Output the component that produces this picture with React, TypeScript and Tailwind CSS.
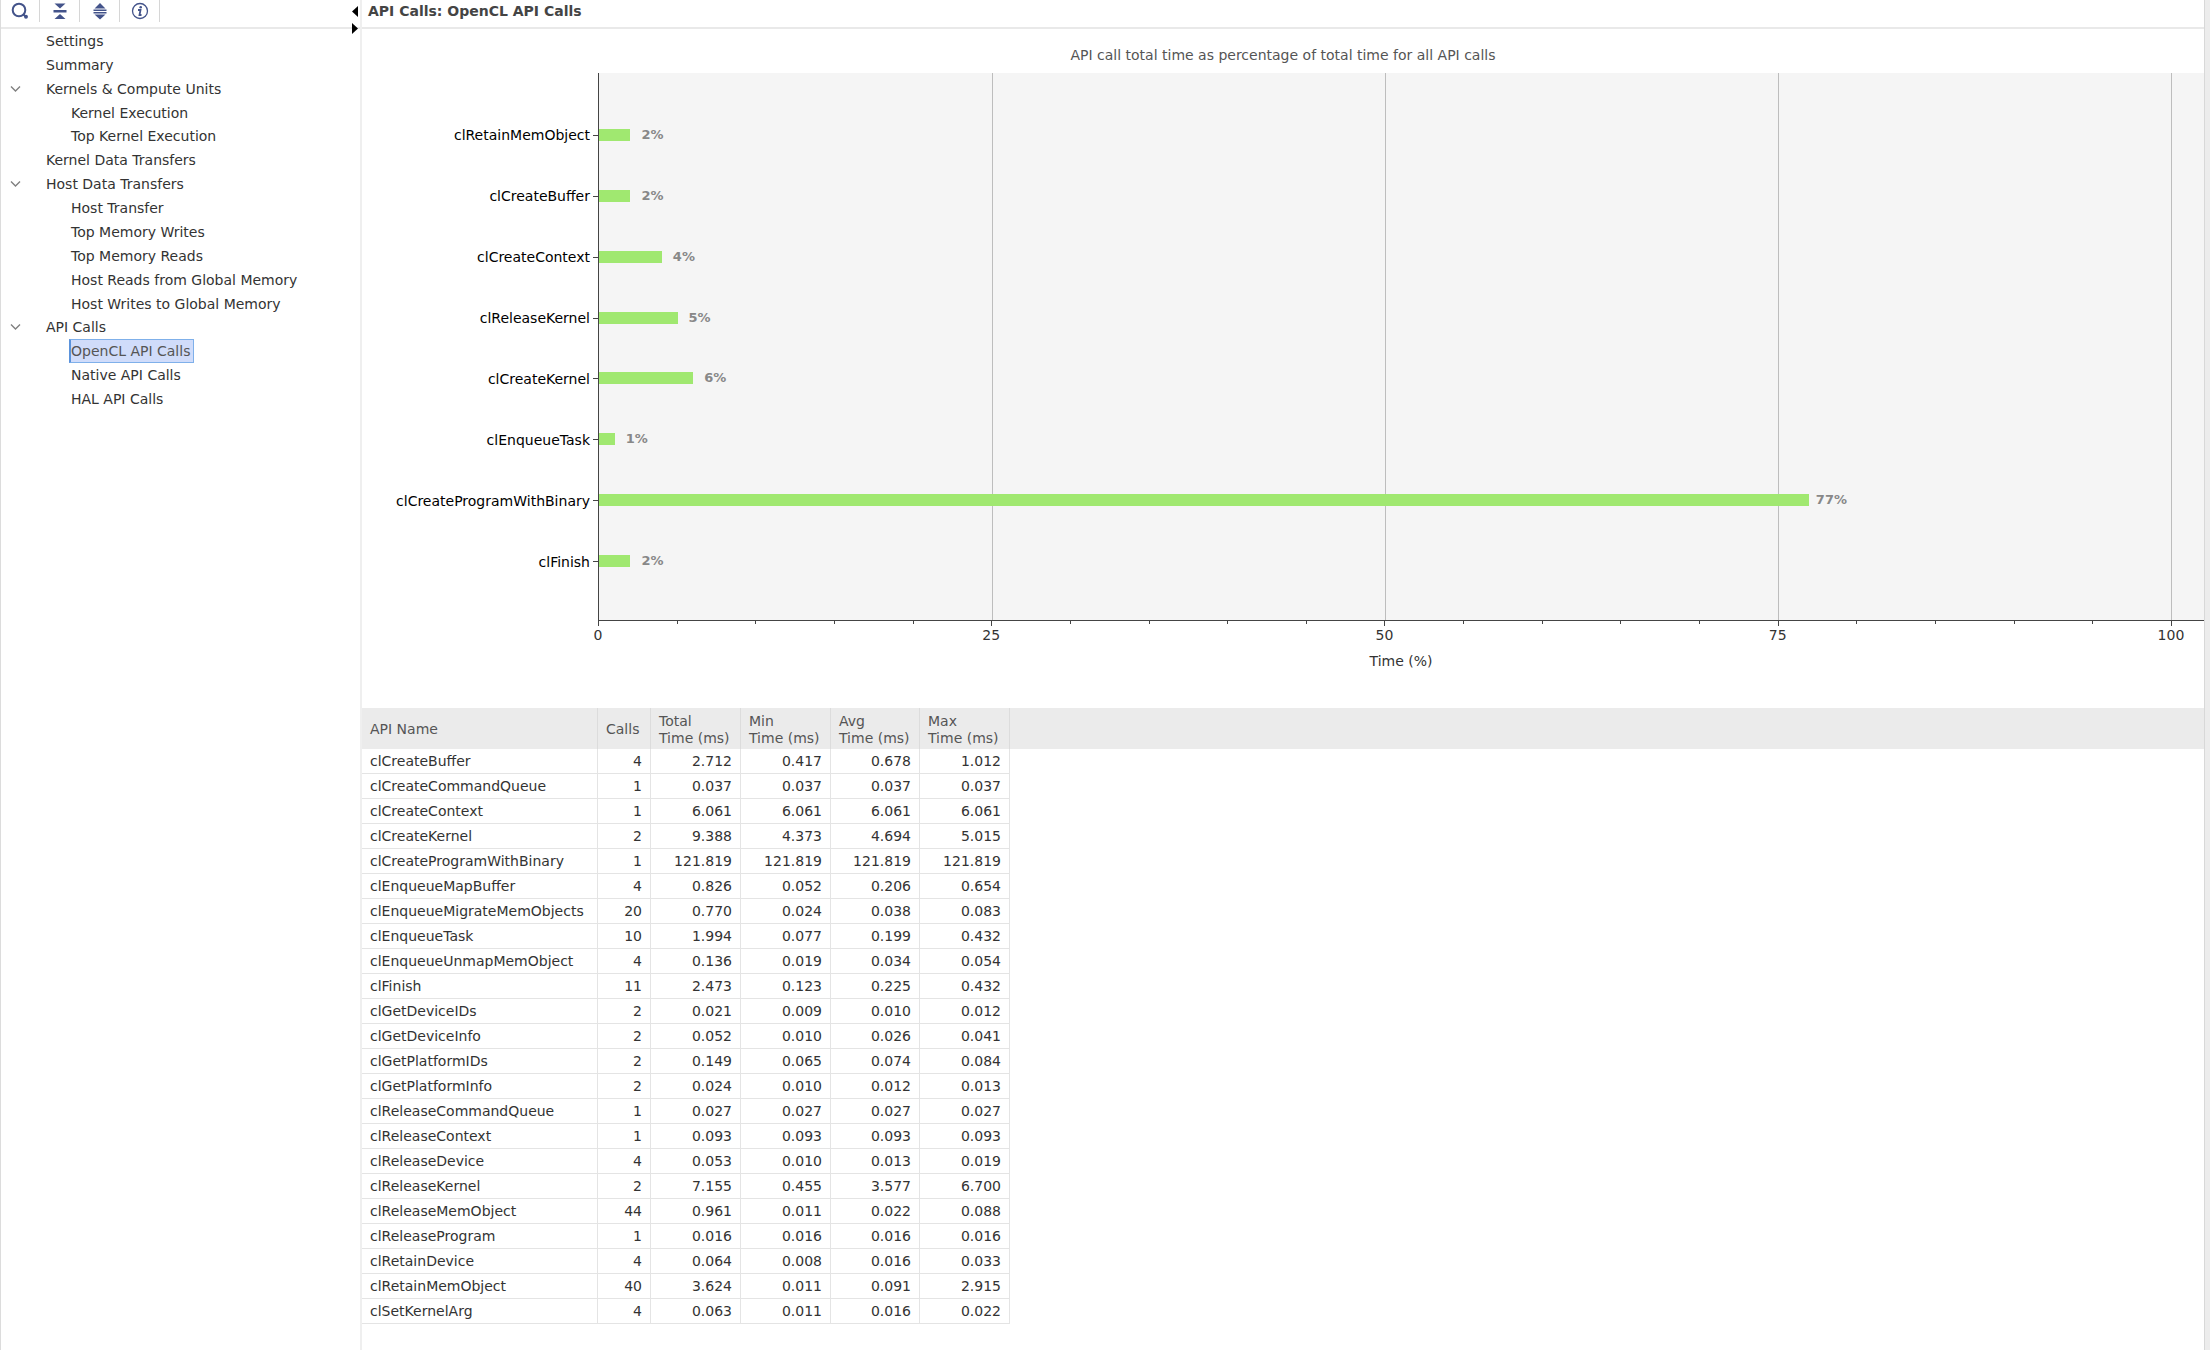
import React from "react";

type TreeItem = { label: string; depth: 0 | 1; open?: boolean; selected?: boolean };

const tree: TreeItem[] = [
  { label: "Settings", depth: 0 },
  { label: "Summary", depth: 0 },
  { label: "Kernels & Compute Units", depth: 0, open: true },
  { label: "Kernel Execution", depth: 1 },
  { label: "Top Kernel Execution", depth: 1 },
  { label: "Kernel Data Transfers", depth: 0 },
  { label: "Host Data Transfers", depth: 0, open: true },
  { label: "Host Transfer", depth: 1 },
  { label: "Top Memory Writes", depth: 1 },
  { label: "Top Memory Reads", depth: 1 },
  { label: "Host Reads from Global Memory", depth: 1 },
  { label: "Host Writes to Global Memory", depth: 1 },
  { label: "API Calls", depth: 0, open: true },
  { label: "OpenCL API Calls", depth: 1, selected: true },
  { label: "Native API Calls", depth: 1 },
  { label: "HAL API Calls", depth: 1 },
];

const bars: [string, number][] = [
  ["clRetainMemObject", 2],
  ["clCreateBuffer", 2],
  ["clCreateContext", 4],
  ["clReleaseKernel", 5],
  ["clCreateKernel", 6],
  ["clEnqueueTask", 1],
  ["clCreateProgramWithBinary", 77],
  ["clFinish", 2],
];

const AXIS_MAX = 102.1;
const toPercent = (value: number) => `${(value / AXIS_MAX) * 100}%`;
const ticks = Array.from({ length: 21 }, (_, i) => i * 5);

const columns = [["API Name"], ["Calls"], ["Total", "Time (ms)"], ["Min", "Time (ms)"], ["Avg", "Time (ms)"], ["Max", "Time (ms)"]];

const rows: string[][] = [
  ["clCreateBuffer", "4", "2.712", "0.417", "0.678", "1.012"],
  ["clCreateCommandQueue", "1", "0.037", "0.037", "0.037", "0.037"],
  ["clCreateContext", "1", "6.061", "6.061", "6.061", "6.061"],
  ["clCreateKernel", "2", "9.388", "4.373", "4.694", "5.015"],
  ["clCreateProgramWithBinary", "1", "121.819", "121.819", "121.819", "121.819"],
  ["clEnqueueMapBuffer", "4", "0.826", "0.052", "0.206", "0.654"],
  ["clEnqueueMigrateMemObjects", "20", "0.770", "0.024", "0.038", "0.083"],
  ["clEnqueueTask", "10", "1.994", "0.077", "0.199", "0.432"],
  ["clEnqueueUnmapMemObject", "4", "0.136", "0.019", "0.034", "0.054"],
  ["clFinish", "11", "2.473", "0.123", "0.225", "0.432"],
  ["clGetDeviceIDs", "2", "0.021", "0.009", "0.010", "0.012"],
  ["clGetDeviceInfo", "2", "0.052", "0.010", "0.026", "0.041"],
  ["clGetPlatformIDs", "2", "0.149", "0.065", "0.074", "0.084"],
  ["clGetPlatformInfo", "2", "0.024", "0.010", "0.012", "0.013"],
  ["clReleaseCommandQueue", "1", "0.027", "0.027", "0.027", "0.027"],
  ["clReleaseContext", "1", "0.093", "0.093", "0.093", "0.093"],
  ["clReleaseDevice", "4", "0.053", "0.010", "0.013", "0.019"],
  ["clReleaseKernel", "2", "7.155", "0.455", "3.577", "6.700"],
  ["clReleaseMemObject", "44", "0.961", "0.011", "0.022", "0.088"],
  ["clReleaseProgram", "1", "0.016", "0.016", "0.016", "0.016"],
  ["clRetainDevice", "4", "0.064", "0.008", "0.016", "0.033"],
  ["clRetainMemObject", "40", "3.624", "0.011", "0.091", "2.915"],
  ["clSetKernelArg", "4", "0.063", "0.011", "0.016", "0.022"],
];

function SearchIcon() {
  return (
    <svg width="20" height="20" viewBox="0 0 20 20" fill="none" stroke="#43538a" strokeWidth="2">
      <circle cx="9" cy="9" r="6.300" />
      <path d="M13.500 13.500l2 2" />
      <circle cx="16" cy="15.800" r="1.200" strokeWidth="1.500" fill="#43538a" />
    </svg>
  );
}

function CollapseIcon() {
  return (
    <svg width="20" height="20" viewBox="0 0 20 20" fill="#43538a">
      <path d="M4.500 2.500h11L10 7.500zM3.500 9h13v2.500h-13zM4.500 18h11L10 13z" />
    </svg>
  );
}

function ExpandIcon() {
  return (
    <svg width="20" height="20" viewBox="0 0 20 20" fill="#43538a">
      <path d="M4.500 7.500h11L10 2zM3.500 8.500h13v1.500h-13zM3.500 11h13v1.500h-13zM4.500 13.500h11L10 18.500z" />
    </svg>
  );
}

function InfoIcon() {
  return (
    <svg width="20" height="20" viewBox="0 0 20 20" fill="none" stroke="#43538a">
      <circle cx="10" cy="10" r="7.500" strokeWidth="1.300" />
      <circle cx="10.700" cy="6.300" r="1.300" fill="#43538a" stroke="none" />
      <path d="M8 9h2.500l-1 5h2" strokeWidth="1.800" />
    </svg>
  );
}

const tools = [
  { label: "Search", icon: <SearchIcon /> },
  { label: "Collapse all", icon: <CollapseIcon /> },
  { label: "Expand all", icon: <ExpandIcon /> },
  { label: "Information", icon: <InfoIcon /> },
];

function Sidebar() {
  return (
    <aside className="flex w-[362px] shrink-0 flex-col border-r-2 border-l border-r-[#efefef] border-l-[#dcdcdc]">
      <div className="relative flex h-[29px] items-start border-b-2 border-[#e9e9e9]">
        {tools.map((tool) => (
          <button
            key={tool.label}
            aria-label={tool.label}
            className="flex h-[22px] w-10 items-center justify-center border-r border-[#d6d6d6] first:w-[39px]"
          >
            {tool.icon}
          </button>
        ))}
        <div className="absolute top-1.5 right-px flex w-2 flex-col gap-[6px]">
          <button aria-label="Hide sidebar">
            <svg width="8" height="11" viewBox="0 0 8 11">
              <path d="M7 0v11L1 5.500z" />
            </svg>
          </button>
          <button aria-label="Widen sidebar">
            <svg width="8" height="11" viewBox="0 0 8 11">
              <path d="M1 0v11L7 5.500z" />
            </svg>
          </button>
        </div>
      </div>
      <ul className="grid h-[382px] auto-rows-fr">
        {tree.map((item) => (
          <li key={item.label} className="flex items-center">
            <span className="flex w-[43px] pl-[9px]">
              {item.open && (
                <button aria-label={`Collapse ${item.label}`}>
                  <svg width="11" height="8" viewBox="0 0 11 8" fill="none" stroke="#808080" strokeWidth="1.400">
                    <path d="M1 1.500l4.500 4.500L10 1.500" />
                  </svg>
                </button>
              )}
            </span>
            <button
              className={
                item.selected
                  ? "ml-[25px] h-full border border-l-2 border-[#7fb0ea] border-l-[#5b93dc] bg-[#d0dcfa] pr-[3px] text-[#555]"
                  : item.depth === 1
                    ? "ml-[27px]"
                    : "ml-0.5"
              }
            >
              {item.label}
            </button>
          </li>
        ))}
      </ul>
    </aside>
  );
}

function Chart() {
  return (
    <figure>
      <figcaption className="pt-4 text-center leading-5 text-[#555]">
        API call total time as percentage of total time for all API calls
      </figcaption>
      <div className="mt-2 grid grid-cols-[236px_1fr] text-black">
        <div className="grid h-[548px] auto-rows-fr pt-[31px] pb-[30px]">
          {bars.map(([name]) => (
            <div key={name} className="flex items-center justify-end gap-[3px] pt-0.5">
              <span>{name}</span>
              <span className="h-px w-[5px] bg-[#444]" />
            </div>
          ))}
        </div>
        <div className="relative grid auto-rows-fr border-b border-l border-[#444] bg-[#f5f5f5] pt-[31px] pb-[30px]">
          {[25, 50, 75, 100].map((value) => (
            <span key={value} className="absolute inset-y-0 w-px bg-[#bdbdbd]" style={{ left: toPercent(value) }} />
          ))}
          {bars.map(([name, value]) => (
            <div key={name} className="relative flex items-center pt-0.5">
              <span className="h-3 shrink-0 bg-[#a0e870]" style={{ width: toPercent(value) }} />
              <span className="w-11 text-center text-[13px] font-bold text-[#888]">{value}%</span>
            </div>
          ))}
        </div>
        <div className="relative col-start-2 h-6">
          {ticks.map((value) => (
            <span
              key={value}
              className={value % 25 ? "absolute top-0 h-[3px] w-px bg-[#444]" : "absolute top-0 h-[5px] w-px bg-[#444]"}
              style={{ left: toPercent(value) }}
            />
          ))}
          {[0, 25, 50, 75, 100].map((value) => (
            <span key={value} className="absolute top-1 -translate-x-1/2 leading-5 text-[#333]" style={{ left: toPercent(value) }}>
              {value}
            </span>
          ))}
        </div>
        <div className="col-start-2 pt-1.5 text-center leading-5 text-[#333]">Time (%)</div>
      </div>
    </figure>
  );
}

function CallsTable() {
  return (
    <div className="mt-[37px] bg-[linear-gradient(#ebebeb,#ebebeb)] bg-[length:100%_41px] bg-no-repeat">
      <table className="w-[648px] table-fixed border-separate border-spacing-0">
        <colgroup>
          <col className="w-[236px]" />
          <col className="w-[53px]" />
          <col className="w-[90px]" />
          <col className="w-[90px]" />
          <col className="w-[89px]" />
          <col className="w-[90px]" />
        </colgroup>
        <thead>
          <tr className="h-[41px]">
            {columns.map((lines, i) => (
              <th
                key={i}
                scope="col"
                className="border-r border-[#dcdcdc] pt-0.5 pl-2 text-left align-middle leading-[17px] font-normal text-[#555]"
              >
                {lines.map((line) => (
                  <span key={line} className="block whitespace-nowrap">
                    {line}
                  </span>
                ))}
              </th>
            ))}
          </tr>
        </thead>
        <tbody>
          {rows.map((row) => (
            <tr key={row[0]} className="h-[25px]">
              {row.map((cell, i) => (
                <td
                  key={i}
                  className={
                    i === 0
                      ? "border-r border-b border-[#e4e4e4] pl-2 leading-5"
                      : "border-r border-b border-[#e4e4e4] pr-2 text-right leading-5"
                  }
                >
                  {cell}
                </td>
              ))}
            </tr>
          ))}
        </tbody>
      </table>
    </div>
  );
}

export default function App() {
  return (
    <div className="flex min-h-screen bg-white font-['DejaVu_Sans',sans-serif] text-[14px] leading-5 text-[#333]">
      <Sidebar />
      <main className="min-w-0 flex-1">
        <h1 className="flex h-[29px] items-start border-b-2 border-[#e9e9e9] pl-1.5 text-[14px] leading-[22px] font-bold text-[#444]">
          API Calls: OpenCL API Calls
        </h1>
        <Chart />
        <CallsTable />
      </main>
      <div className="w-1.5 shrink-0 border-l border-[#d8d8d8] bg-[#ececec]" />
    </div>
  );
}
